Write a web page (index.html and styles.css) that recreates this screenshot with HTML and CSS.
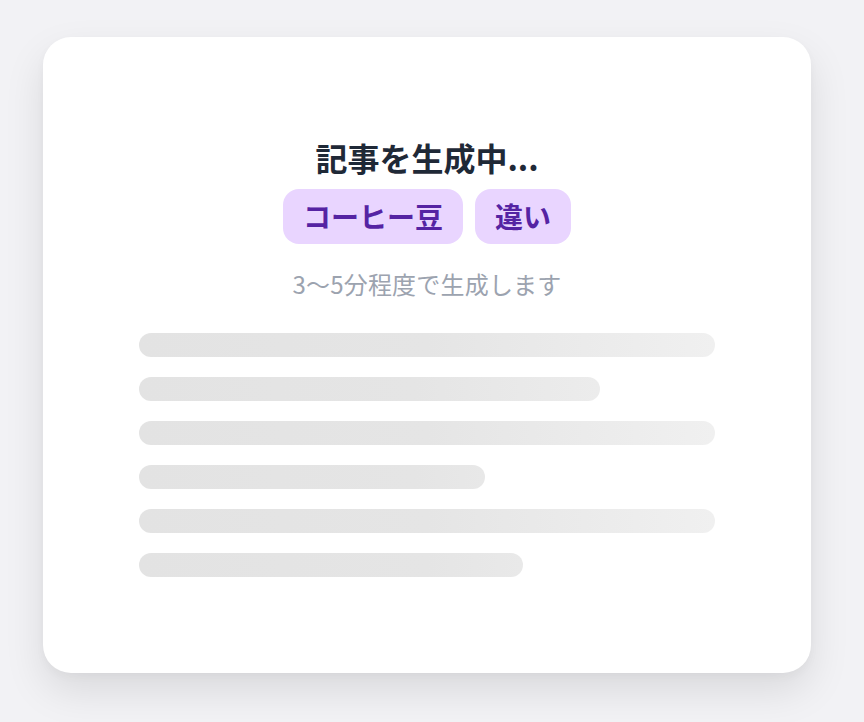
FILE: index.html
```html
<!DOCTYPE html>
<html lang="ja">
<head>
<meta charset="utf-8">
<title>記事を生成中</title>
<link rel="stylesheet" href="styles.css">
</head>
<body>
<div class="page">
  <div class="card">
    <h1 class="title">記事を生成中...</h1>
    <div class="chips">
      <span class="chip">コーヒー豆</span>
      <span class="chip">違い</span>
    </div>
    <p class="note">3〜5分程度で生成します</p>
    <div class="bars">
      <div class="bar w100"></div>
      <div class="bar w80"></div>
      <div class="bar w100"></div>
      <div class="bar w60"></div>
      <div class="bar w100"></div>
      <div class="bar w67"></div>
    </div>
  </div>
</div>
</body>
</html>
```
FILE: styles.css
```css
html, body {
  margin: 0;
  padding: 0;
  background: #f2f2f5;
  font-family: "Noto Sans CJK JP", "Noto Sans", sans-serif;
}
.page {
  padding: 37px 0 0 43px;
  height: 722px;
  box-sizing: border-box;
}
.card {
  width: 768px;
  height: 636px;
  box-sizing: border-box;
  background: #ffffff;
  border-radius: 28px;
  box-shadow: 0 18px 40px rgba(0, 0, 0, 0.10), 0 4px 10px rgba(0, 0, 0, 0.03);
  padding: 96px 96px;
  display: flex;
  flex-direction: column;
  align-items: center;
}
.title {
  margin: 0;
  font-size: 32px;
  line-height: 48px;
  font-weight: 700;
  color: #1f2937;
}
.chips {
  margin-top: 8px;
  display: flex;
  gap: 12px;
}
.chip {
  background: #e9d5ff;
  color: #5523a3;
  font-size: 28px;
  line-height: 42px;
  font-weight: 700;
  padding: 6px 20px 7px;
  border-radius: 16px;
}
.note {
  margin: 22px 0 0;
  font-size: 24px;
  line-height: 36px;
  color: #9ca3af;
  letter-spacing: 0.2px;
}
.bars {
  margin-top: 31px;
  width: 100%;
  display: flex;
  flex-direction: column;
  gap: 20px;
}
.bar {
  height: 24px;
  border-radius: 12px;
  background: linear-gradient(90deg, #e3e3e3 0%, #e5e5e5 50%, #f0f0f0 100%);
}
.w100 { width: 100%; }
.w80 { width: 80%; background: linear-gradient(90deg, #e3e3e3 0%, #e5e5e5 60%, #ececec 100%); }
.w60 { width: 60%; background: linear-gradient(90deg, #e3e3e3 0%, #e5e5e5 80%, #e8e8e8 100%); }
.w67 { width: 66.67%; background: linear-gradient(90deg, #e3e3e3 0%, #e5e5e5 75%, #e9e9e9 100%); }
```
